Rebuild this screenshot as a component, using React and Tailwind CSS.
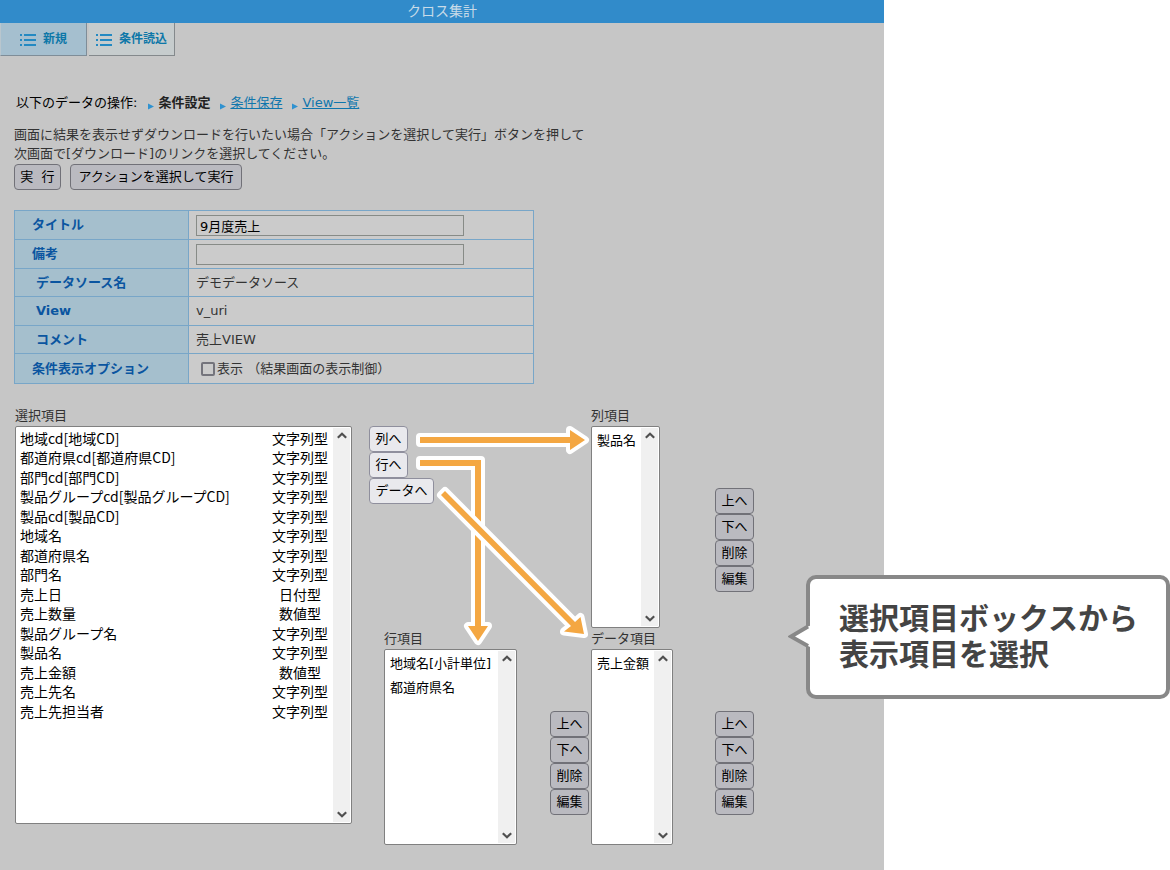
import React, { useState } from 'react'

const FONT = "font-['DejaVu_Sans','Noto_Sans_CJK_JP',sans-serif]"
const FONT_JP = "font-['Noto_Sans_CJK_JP',sans-serif]"

const sourceItems = [
  { name: '地域cd[地域CD]', type: '文字列型' },
  { name: '都道府県cd[都道府県CD]', type: '文字列型' },
  { name: '部門cd[部門CD]', type: '文字列型' },
  { name: '製品グループcd[製品グループCD]', type: '文字列型' },
  { name: '製品cd[製品CD]', type: '文字列型' },
  { name: '地域名', type: '文字列型' },
  { name: '都道府県名', type: '文字列型' },
  { name: '部門名', type: '文字列型' },
  { name: '売上日', type: '日付型' },
  { name: '売上数量', type: '数値型' },
  { name: '製品グループ名', type: '文字列型' },
  { name: '製品名', type: '文字列型' },
  { name: '売上金額', type: '数値型' },
  { name: '売上先名', type: '文字列型' },
  { name: '売上先担当者', type: '文字列型' },
]

const ListIcon = () => (
  <svg width="16" height="13" viewBox="0 0 16 13" fill="#2389c2" aria-hidden="true">
    {[1, 6, 11].map(y => (
      <g key={y}>
        <rect x="0" y={y} width="2" height="2" />
        <rect x="4" y={y} width="12" height="2" />
      </g>
    ))}
  </svg>
)

const Marker = () => (
  <svg className="mt-1.5" width="6" height="7" viewBox="0 0 6 7" aria-hidden="true">
    <path d="M0 0.5L6 3.5L0 6.5Z" fill="#2f92d0" />
  </svg>
)

const Chevron = ({ down }) => (
  <svg width="10" height="7" viewBox="0 0 10 7" fill="none" stroke="#505050" strokeWidth="2.2">
    <path d={down ? 'M0.8 1.2L5 5.2L9.2 1.2' : 'M0.8 5.8L5 1.8L9.2 5.8'} />
  </svg>
)

const Button = ({ light, className, children }) => (
  <button
    type="button"
    className={`h-[26px] rounded border text-[13px] leading-5 text-black whitespace-nowrap cursor-pointer ${light ? 'bg-[#e9e9ed] border-[#8f8f9d]' : 'bg-[#babac0] border-[#717178]'} ${className}`}
  >
    {children}
  </button>
)

const Field = ({ id, label, className, children }) => (
  <div className="flex flex-col">
    <label htmlFor={id} className="h-[21px] text-[13px] leading-[22px] text-[#333]">{label}</label>
    <div className={`flex bg-white border border-[#808080] rounded-xs p-px ${className}`}>
      {children}
      <div className="w-[17px] shrink-0 bg-[#f0f0f0] flex flex-col items-center justify-between py-1" aria-hidden="true">
        <Chevron />
        <Chevron down />
      </div>
    </div>
  </div>
)

const ItemList = ({ id, label, items, className }) => (
  <Field id={id} label={label} className={className}>
    <select id={id} multiple className="flex-1 min-w-0 appearance-none overflow-hidden bg-white pt-0.5 text-[13px] text-black outline-none">
      {items.map(item => (
        <option key={item} className="h-6 p-0 pl-1 leading-6">{item}</option>
      ))}
    </select>
  </Field>
)

const OrderButtons = () => (
  <div className="flex flex-col mt-[83px]">
    {['上へ', '下へ', '削除', '編集'].map(text => (
      <Button key={text} className="w-[39px]">{text}</Button>
    ))}
  </div>
)

const Row = ({ label, htmlFor, indent, className, children }) => (
  <tr className={className}>
    <th scope="row" className={`w-[174px] border border-[#78a6c8] bg-[#a5bfcd] text-left font-bold text-[#0a55a0] ${indent ? 'pl-[21px]' : 'pl-[17px]'}`}>
      {htmlFor ? <label htmlFor={htmlFor}>{label}</label> : label}
    </th>
    <td className="border border-[#78a6c8] bg-[#cbcbcb] pl-[7px] text-[#333]">{children}</td>
  </tr>
)

const Arrow = ({ d }) => (
  <g strokeLinejoin="round">
    <path d={d} fill="#fff" stroke="#fff" strokeWidth="8" />
    <path d={d} fill="#f4a742" />
  </g>
)

const Callout = () => (
  <div className="absolute top-[575px] -left-[78px] right-0 rounded-[10px] border-4 border-[#888] bg-white pl-[29px] py-[22px] h-[124px]">
    <p className={`text-[30px] leading-9 font-bold text-[#444] whitespace-nowrap ${FONT}`}>
      選択項目ボックスから<br />表示項目を選択
    </p>
    <svg className="absolute top-[43px] -left-[22px]" width="24" height="30" viewBox="0 0 24 30" aria-hidden="true">
      <path d="M24 3L20 4.5L3 14.5L20 24L24 26Z" fill="#fff" />
      <path d="M20 4.5L3 14.5L20 24" fill="none" stroke="#888" strokeWidth="4" />
    </svg>
  </div>
)

export default function App() {
  const [title, setTitle] = useState('9月度売上')
  const [note, setNote] = useState('')
  const [show, setShow] = useState(false)

  const inputClass = 'block w-[268px] h-[21px] border border-[#878b87] bg-transparent px-[3px] text-[13px] leading-[19px] text-black outline-none'

  return (
    <div className={`flex min-h-screen bg-white text-[13px] ${FONT}`}>
      <main className="flex-1 min-w-0 bg-[#c6c6c6] pb-6">
        <header className="h-[23px] bg-[#318bca] text-center">
          <h1 className="text-sm leading-[22px] text-[#c8dbe8]">クロス集計</h1>
        </header>

        <nav className="flex gap-0.5 h-[33px] text-xs font-bold text-[#0c77a8]">
          <a href="#new" className="w-[87px] flex items-center justify-center gap-[7px] border-r border-b border-l border-[#7f8d98] border-l-[#b9c6ce] bg-[#a5bfcf]">
            <ListIcon />新規
          </a>
          <a href="#load" className="w-[86px] flex items-center justify-center gap-[7px] border-r border-b border-[#84898c] bg-[#c6cccd]">
            <ListIcon />条件読込
          </a>
        </nav>

        <div className="px-3.5">
          <div className="mt-[37px] flex items-center pl-0.5 leading-5">
            <span className="mr-[11px] text-black">以下のデータの操作:</span>
            <span className="flex items-center gap-1 mr-2.5"><Marker /><b className="text-[#222]">条件設定</b></span>
            <span className="flex items-center gap-1 mr-2.5"><Marker /><a href="#save" className="text-[#0f76ad] underline">条件保存</a></span>
            <span className="flex items-center gap-1"><Marker /><a href="#views" className="text-[#0f76ad] underline">View一覧</a></span>
          </div>

          <p className="mt-3 leading-[19px] text-[#333]">
            画面に結果を表示せずダウンロードを行いたい場合「アクションを選択して実行」ボタンを押して<br />
            次画面で[ダウンロード]のリンクを選択してください。
          </p>
          <div className="mt-px flex gap-[9px]">
            <Button className="w-[47px]">実&nbsp; 行</Button>
            <Button className="w-[172px]">アクションを選択して実行</Button>
          </div>

          <table className="mt-5 w-[520px] border-collapse leading-5">
            <tbody>
              <Row label="タイトル" htmlFor="title" className="h-[29px]">
                <input id="title" type="text" value={title} onChange={e => setTitle(e.target.value)} className={inputClass} />
              </Row>
              <Row label="備考" htmlFor="note" className="h-[29px]">
                <input id="note" type="text" value={note} onChange={e => setNote(e.target.value)} className={inputClass} />
              </Row>
              <Row label="データソース名" indent className="h-[28px]">デモデータソース</Row>
              <Row label="View" indent className="h-[29px]">v_uri</Row>
              <Row label="コメント" indent className="h-[28px]">売上VIEW</Row>
              <Row label="条件表示オプション" className="h-[30px]">
                <label className="flex items-center gap-0.5 pl-[5px]">
                  <input
                    type="checkbox"
                    checked={show}
                    onChange={e => setShow(e.target.checked)}
                    className="w-3.5 h-3.5 appearance-none rounded-xs border-2 border-[#74747c] bg-[#cbcbcb] checked:bg-[#318bca]"
                  />
                  表示 （結果画面の表示制御）
                </label>
              </Row>
            </tbody>
          </table>

          <div className="mt-[21px] flex items-start gap-[17px] pl-px">
            <Field id="source" label="選択項目" className="w-[337px] h-[398px]">
              <select id="source" multiple className={`flex-1 min-w-0 appearance-none overflow-hidden bg-white text-sm text-black outline-none ${FONT_JP}`}>
                {/* the tab lines the type names up in a second column; short ones get half a character of indent */}
                {sourceItems.map(({ name, type }) => (
                  <option
                    key={name}
                    label={`${name}\t${type.length < 4 ? '\u2002' : ''}${type}`}
                    className="h-5 odd:h-[19px] p-0 pl-[3px] leading-[18px] whitespace-pre [tab-size:252px]"
                  >
                    {name} {type}
                  </option>
                ))}
              </select>
            </Field>

            <div className="relative grid grid-cols-[222px_auto]">
              <div className="flex flex-col items-start pt-[21px]">
                <Button light className="w-[39px]">列へ</Button>
                <Button light className="w-[39px]">行へ</Button>
                <Button light className="w-[65px]">データへ</Button>
              </div>
              <div className="flex">
                <div className="w-[124px]">
                  <ItemList id="columns" label="列項目" items={['製品名']} className="w-[69px] h-[202px]" />
                </div>
                <OrderButtons />
              </div>
              <div className="flex pl-[15px]">
                <div className="w-[166px]">
                  <ItemList id="rows" label="行項目" items={['地域名[小計単位]', '都道府県名']} className="w-[133px] h-[196px]" />
                </div>
                <OrderButtons />
              </div>
              <div className="flex">
                <div className="w-[124px]">
                  <ItemList id="data" label="データ項目" items={['売上金額']} className="w-[82px] h-[196px]" />
                </div>
                <OrderButtons />
              </div>

              <svg className="absolute top-0 left-0 pointer-events-none" width="224" height="244" viewBox="0 0 224 244" aria-hidden="true">
                <Arrow d="M51 32H201V25L216 35L201 45V38H51Z" />
                <Arrow d="M51 55H112V221H119L109 236L99 221H106V61H51Z" />
                <Arrow d="M76 86L206 217L211.5 212L215 229L195 226.5L202 221L72 90Z" />
              </svg>
            </div>
          </div>
        </div>
      </main>

      <aside className="relative w-[286px] shrink-0">
        <Callout />
      </aside>
    </div>
  )
}
